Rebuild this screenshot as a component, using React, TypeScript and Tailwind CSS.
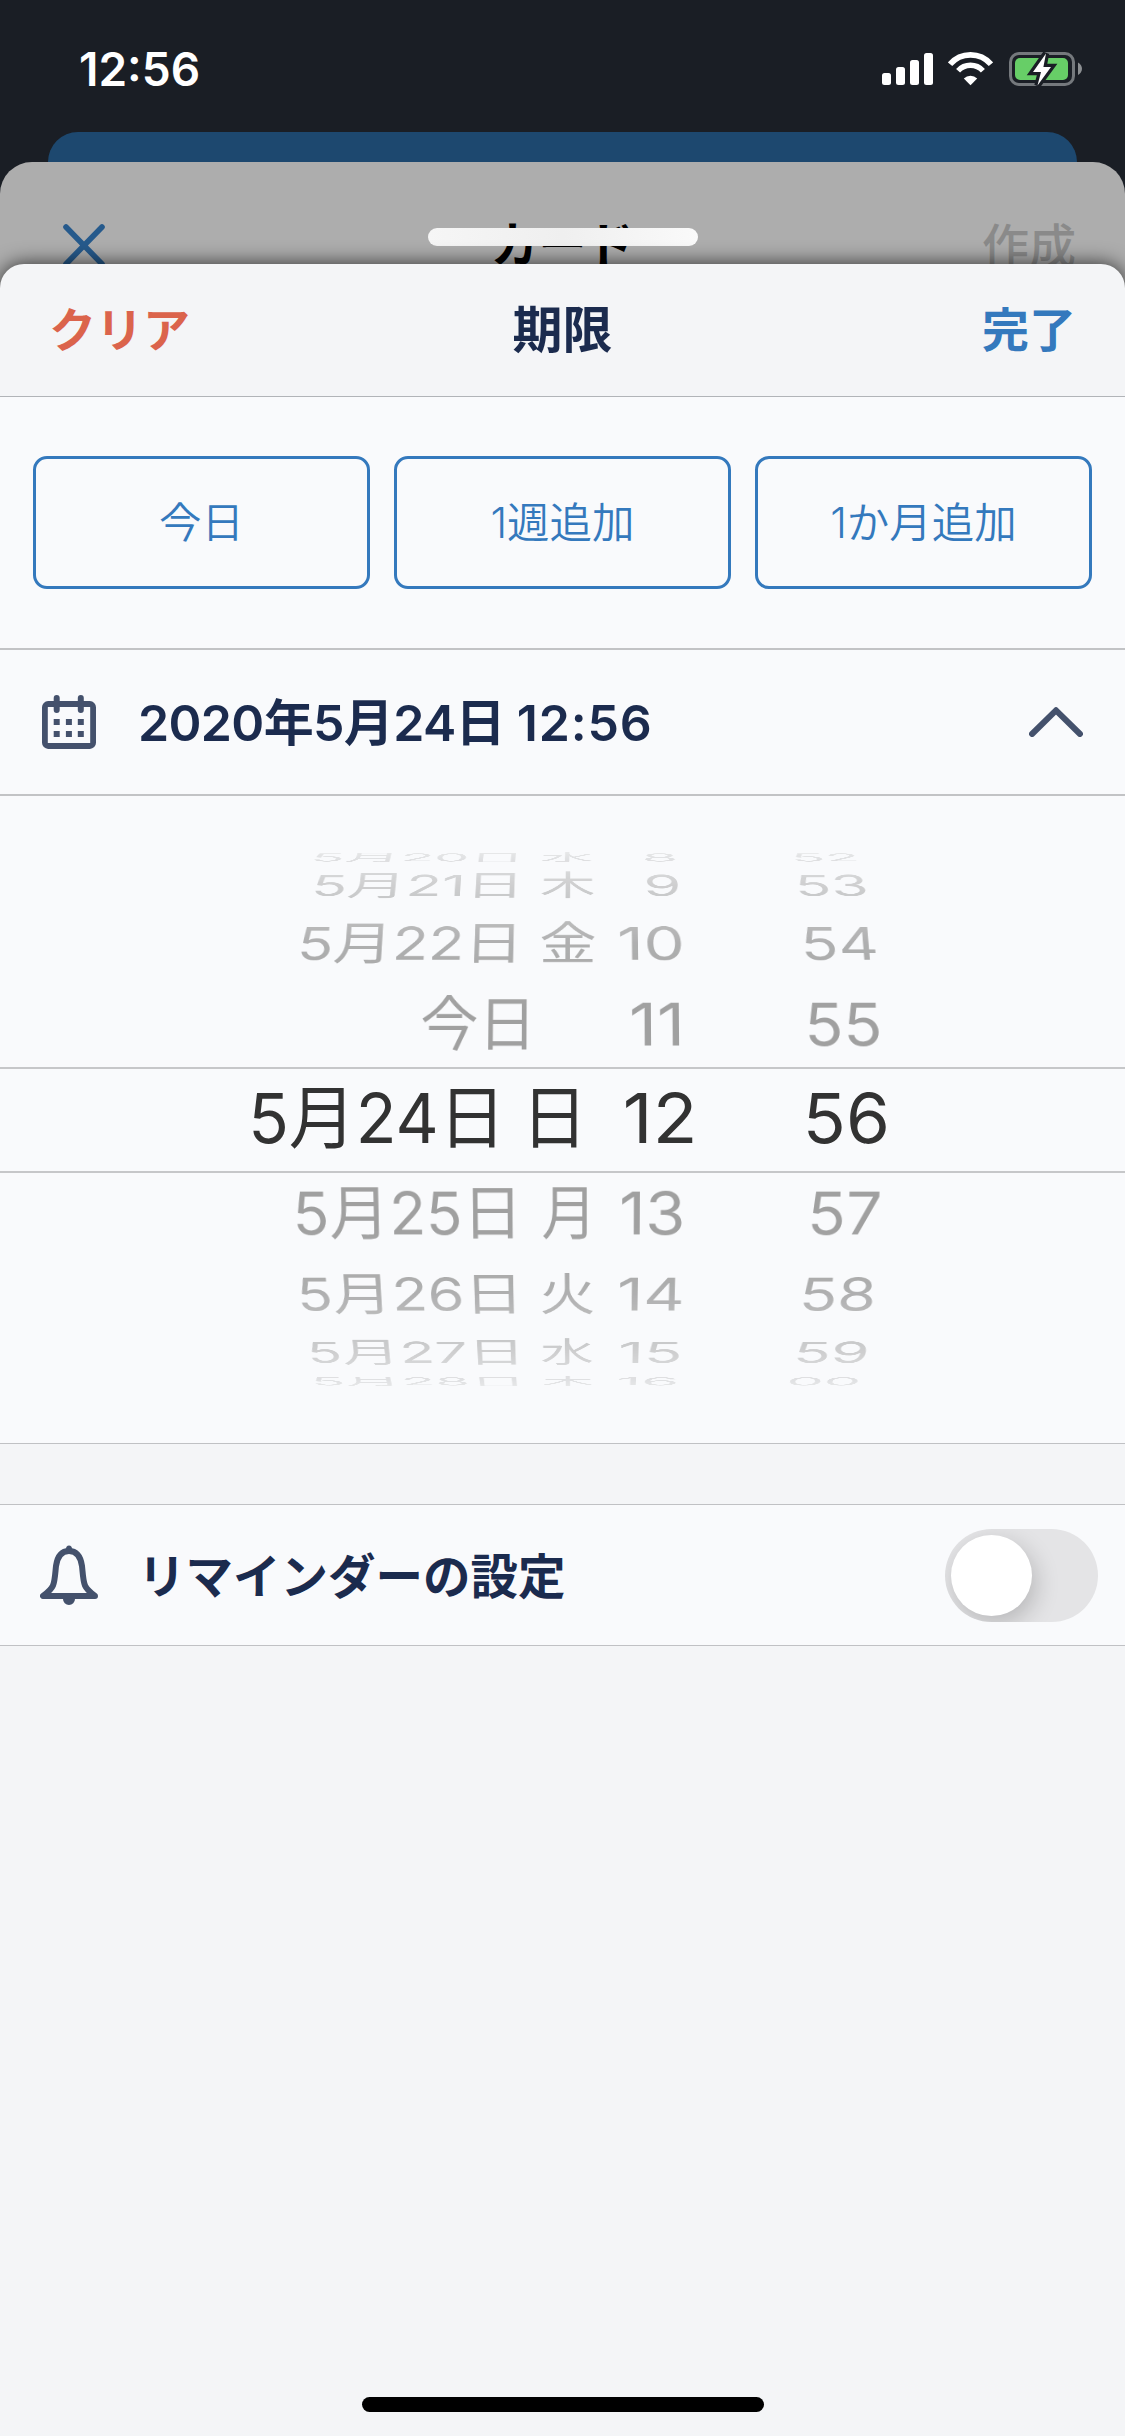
import type { CSSProperties } from 'react';

/** A piece of text on the date wheel: text, left edge, and drawn width. */
type Label = [text: string, left: number, width: number];

interface WheelRow {
  gap: number; // distance to the row above
  capHeight: number;
  tilt: number; // perspective of the drum at this row
  labels: Label[];
}

const WHEEL_FONT = '400 69px Inter, "Noto Sans CJK JP", sans-serif';
const WHEEL_CAP = 50.2;
const VANISHING_X = 590;

const rowsAbove: WheelRow[] = [
  { gap: 57, capHeight: 8, tilt: -0.0012, labels: [['5月20日', 315, 201], ['水', 542, 51], ['8', 645, 30], ['52', 795, 61]] },
  { gap: 14, capHeight: 21, tilt: -0.0005, labels: [['5月21日', 316, 199], ['木', 541, 53], ['9', 647, 31], ['53', 799, 66]] },
  { gap: 31, capHeight: 33, tilt: -0.0003, labels: [['5月22日', 302, 212], ['金', 541, 54], ['10', 619.5, 61.5], ['54', 805, 70]] },
  { gap: 43, capHeight: 43, tilt: -0.0001, labels: [['今日', 422, 105], ['11', 632, 47], ['55', 809, 69.5]] },
];

const currentLabels: Label[] = [['5月24日', 253, 242], ['日', 533, 44], ['12', 626, 67], ['56', 808, 78]];

const rowsBelow: WheelRow[] = [
  { gap: 19, capHeight: 43, tilt: 0.0001, labels: [['5月25日', 297, 216], ['月', 543, 44], ['13', 622, 60], ['57', 812, 67]] },
  { gap: 43, capHeight: 33, tilt: 0.0003, labels: [['5月26日', 301, 213], ['火', 542, 51], ['14', 620, 61.5], ['58', 804, 69]] },
  { gap: 31, capHeight: 21, tilt: 0.0005, labels: [['5月27日', 311, 205], ['水', 542, 51], ['15', 621, 58], ['59', 798, 68]] },
  { gap: 14, capHeight: 8, tilt: 0.0012, labels: [['5月28日', 315, 202], ['木', 543, 49], ['16', 619, 57], ['00', 790, 68]] },
];

const ruler = document.createElement('canvas').getContext('2d')!;

/** Projects a label onto the drum so that its ink fills the given width. */
function project([text, left, width]: Label, capHeight: number, tilt: number): CSSProperties {
  ruler.font = WHEEL_FONT;
  const m = ruler.measureText(text);
  const inkLeft = -m.actualBoundingBoxLeft;
  const sx = width / (m.actualBoundingBoxRight - inkLeft);
  const sy = capHeight / WHEEL_CAP;
  const v = VANISHING_X - left;
  return {
    transform: `translateX(${v}px) matrix3d(1,0,0,0,0,1,0,${tilt},0,0,1,0,0,0,0,1) translateX(${-v - inkLeft * sx}px) scale(${sx}, ${sy})`,
  };
}

function WheelLabels({ labels, capHeight, tilt }: { labels: Label[]; capHeight: number; tilt: number }) {
  return (
    <>
      {labels.map((label, i) => {
        const prev = labels[i - 1];
        const start = prev ? prev[1] + prev[2] : 0;
        return (
          <div key={label[0]} className="flex shrink-0 items-center" style={{ marginLeft: label[1] - start, width: label[2] }}>
            <span
              className="block origin-left whitespace-nowrap text-[69px] leading-none font-normal"
              style={project(label, capHeight, tilt)}
            >
              {label[0]}
            </span>
          </div>
        );
      })}
    </>
  );
}

function DrumRow({ row }: { row: WheelRow }) {
  return (
    <div className="flex shrink-0 items-center text-[#a0a0a0]" style={{ height: row.capHeight, marginTop: row.gap }}>
      <WheelLabels labels={row.labels} capHeight={row.capHeight} tilt={row.tilt} />
    </div>
  );
}

function DateWheel() {
  return (
    <div className="h-[647px] shrink-0 overflow-hidden bg-[#f9fafc]">
      <div className="flex h-full flex-col [mask-image:linear-gradient(to_bottom,transparent_40px,rgba(0,0,0,0.27)_62px,rgba(0,0,0,0.48)_89px,rgba(0,0,0,0.83)_147px,black_215px,black_430px,rgba(0,0,0,0.83)_498px,rgba(0,0,0,0.48)_557px,rgba(0,0,0,0.27)_585px,transparent_606px)]">
        {rowsAbove.map((row) => (
          <DrumRow key={row.labels[0][0]} row={row} />
        ))}
        <div className="mt-[21px] flex h-[106px] shrink-0 items-center border-y-2 border-[#c6c7c9] pb-[3px] text-[#323232]">
          <WheelLabels labels={currentLabels} capHeight={WHEEL_CAP} tilt={0} />
        </div>
        {rowsBelow.map((row) => (
          <DrumRow key={row.labels[0][0]} row={row} />
        ))}
      </div>
    </div>
  );
}

function SignalIcon() {
  return (
    <svg width="51" height="33" viewBox="0 0 51 33" fill="#fff">
      <rect x="0" y="21" width="9" height="12" rx="2.5" />
      <rect x="14" y="15" width="9" height="18" rx="2.5" />
      <rect x="28" y="8" width="9" height="25" rx="2.5" />
      <rect x="42" y="1" width="9" height="32" rx="2.5" />
    </svg>
  );
}

function WifiIcon() {
  return (
    <svg width="45" height="34" viewBox="0 0 45 34" fill="none" stroke="#fff">
      <path d="M2.1 12.2A27 27 0 0 1 42.9 12.2" strokeWidth="5.6" />
      <path d="M10.1 18.7A16.7 16.7 0 0 1 34.9 18.7" strokeWidth="5.4" />
      <path d="M22.5 33.2L15.8 26.4A9.8 9.8 0 0 1 29.2 26.4Z" fill="#fff" stroke="none" />
    </svg>
  );
}

function BatteryIcon() {
  const bolt = 'M37 1.5L24 20H32L28.5 33.5L42 15H34.4Z';
  return (
    <svg width="73" height="34" viewBox="0 0 73 34" fill="none">
      <rect x="1.5" y="1.5" width="63" height="31" rx="8.5" stroke="#75797d" strokeWidth="3" />
      <rect x="6" y="6" width="53" height="22" rx="5" fill="#67ce67" />
      <path d="M69 10.5C74.3 13 74.3 20.5 69 23Z" fill="#8c8f92" />
      <path d={bolt} stroke="#1a1e25" strokeWidth="6.5" strokeLinejoin="miter" />
      <path d={bolt} fill="#fff" />
    </svg>
  );
}

function CloseIcon() {
  return (
    <svg className="ml-[14px]" width="42" height="43" viewBox="0 0 42 43" fill="none" stroke="#265a8c" strokeWidth="5.6" strokeLinecap="round">
      <path d="M3 3L39 40M39 3L3 40" />
    </svg>
  );
}

function CalendarIcon() {
  return (
    <svg width="54" height="54" viewBox="0 0 54 54" fill="#44516c">
      <rect x="2.9" y="9" width="48.2" height="42" rx="3.2" fill="none" stroke="#44516c" strokeWidth="5.8" />
      <rect x="11.7" y="0" width="6" height="18" rx="3" />
      <rect x="35.8" y="0" width="6" height="18" rx="3" />
      {[24, 36].map((y) => [11.7, 23.9, 35.8].map((x) => <rect key={`${x}-${y}`} x={x} y={y} width="6" height="6" />))}
    </svg>
  );
}

function BellIcon() {
  return (
    <svg width="58" height="60" viewBox="0 0 58 60" fill="none">
      <path
        d="M29 6C20 6 17 14 16 21C15.3 27 15 36 13 40.5C11.3 44.5 7 48 3 51H55C51 48 46.7 44.5 45 40.5C43 36 42.7 27 42 21C41 14 38 6 29 6Z"
        stroke="#44516c"
        strokeWidth="6"
        strokeLinejoin="round"
      />
      <path d="M23 54h12a6 6 0 0 1-12 0ZM26 4a3 3.5 0 0 1 6 0Z" fill="#44516c" />
    </svg>
  );
}

function ChevronUpIcon() {
  return (
    <svg width="54" height="30" viewBox="0 0 54 30" fill="none" stroke="#44516c" strokeWidth="6" strokeLinecap="round" strokeLinejoin="round">
      <path d="M3 27L27 3.3L51 27" />
    </svg>
  );
}

function StatusBar() {
  return (
    <div className="flex h-[132px] shrink-0 items-start justify-between pl-[79px] pr-[43px]">
      <span className="mt-[46px] text-[46px] leading-none font-semibold text-white">12:56</span>
      <div className="mt-[52px] flex">
        <SignalIcon />
        <div className="ml-[15px]">
          <WifiIcon />
        </div>
        <div className="ml-[16px]">
          <BatteryIcon />
        </div>
      </div>
    </div>
  );
}

function QuickButton({ label }: { label: string }) {
  return (
    <button className="flex h-[133px] items-center justify-center rounded-[14px] border-3 border-[#3479bd] pt-[2px] text-[42.5px] leading-none font-[350] text-[#3479bd]">
      {label}
    </button>
  );
}

export default function App() {
  return (
    <div className="flex h-[2436px] w-[1125px] flex-col overflow-hidden bg-[#1a1e25] font-[Inter,'Noto_Sans_CJK_JP',sans-serif]">
      <StatusBar />
      <div className="mx-[48px] h-[60px] shrink-0 rounded-t-[30px] bg-[#1d486f]" />

      <div className="relative -mt-[30px] h-[132px] shrink-0 rounded-t-[32px] bg-[#adadad]">
        <div className="grid h-[166px] grid-cols-3 items-center px-[49px] leading-none">
          <CloseIcon />
          <span className="text-center text-[48px] font-semibold text-black">カード</span>
          <span className="text-right text-[47px] font-medium text-[#8a8a8a]">作成</span>
        </div>
        <div className="absolute top-[66px] left-[428px] h-[18px] w-[270px] rounded-full bg-linear-to-r from-[#f6f6f6] via-[#efefef] to-[#fafafa]" />
      </div>

      <div className="relative -mt-[30px] flex grow flex-col overflow-hidden rounded-t-[24px] bg-[#f4f5f7] shadow-[0_0_20px_rgba(0,0,0,0.75)]">
        <div className="grid h-[133px] shrink-0 grid-cols-3 items-center border-b border-[#b1b4b8] px-[49px] leading-none">
          <span className="pb-[2px] text-[47px] font-semibold text-[#db644c]">クリア</span>
          <span className="text-center text-[50px] font-semibold text-[#1b2b4e]">期限</span>
          <span className="pb-[2px] text-right text-[47px] font-semibold text-[#3479bd]">完了</span>
        </div>

        <div className="grid h-[251px] shrink-0 grid-cols-3 items-center gap-6 bg-[#f9fafc] px-[33px]">
          <QuickButton label="今日" />
          <QuickButton label="1週追加" />
          <QuickButton label="1か月追加" />
        </div>

        <div className="flex h-[148px] shrink-0 items-center border-y-2 border-[#c2c3c5] bg-[#f9fafc] px-[42px]">
          <CalendarIcon />
          <div className="ml-[42px] grow pt-[2px] text-[50px] leading-none font-semibold text-[#1b2b4e]">
            <span className="tracking-[-0.65px]">2020年5月24日 </span>
            <span className="tracking-[0.8px]">12:56</span>
          </div>
          <ChevronUpIcon />
        </div>

        <DateWheel />

        <div className="h-[62px] shrink-0 border-y border-[#c0c1c4]" />

        <div className="flex h-[141px] shrink-0 items-center border-b border-[#c0c1c4] bg-[#f9fafc] pl-[40px] pr-[27px]">
          <BellIcon />
          <span className="ml-[40px] grow pt-[3px] text-[47.5px] leading-none font-semibold text-[#1b2b4e]">リマインダーの設定</span>
          <button className="flex h-[93px] w-[153px] items-center overflow-hidden rounded-full bg-[#e4e4e6] pl-[6px]">
            <span className="size-[81px] rounded-full bg-white shadow-[4px_8px_24px_rgba(0,0,0,0.2)]" />
          </button>
        </div>

        <div className="mt-auto mb-[24px] h-[15px] w-[402px] shrink-0 self-center rounded-full bg-black" />
      </div>
    </div>
  );
}
